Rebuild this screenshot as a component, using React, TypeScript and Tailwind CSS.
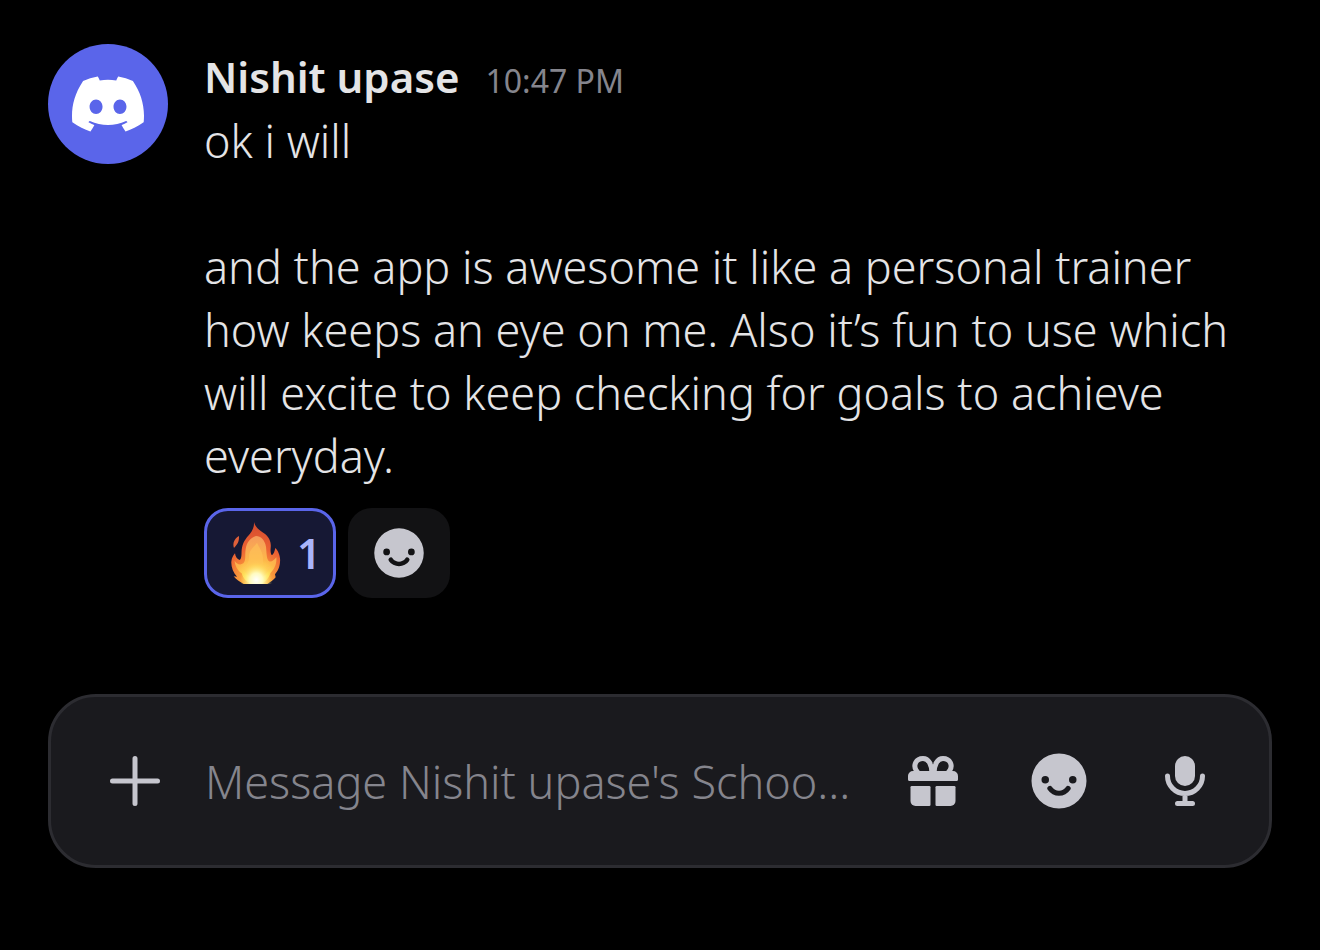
import { SiDiscord } from "react-icons/si";

interface Message {
  author: string;
  time: string;
  body: string;
}

const message: Message = {
  author: "Nishit upase",
  time: "10:47 PM",
  body: "ok i will\n\nand the app is awesome it like a personal trainer how keeps an eye on me. Also it’s fun to use which will excite to keep checking for goals to achieve everyday.",
};

const FireEmoji = () => (
  <svg viewBox="0 0 150 186" className="h-[62px] w-[50px]" aria-hidden="true">
    <defs>
      <radialGradient id="flame" gradientUnits="userSpaceOnUse" cx="75" cy="180" r="160">
        <stop offset="0" stopColor="#ffd45a" />
        <stop offset="0.35" stopColor="#f8953a" />
        <stop offset="0.65" stopColor="#ec6233" />
        <stop offset="1" stopColor="#d9502f" />
      </radialGradient>
      <radialGradient id="inner" gradientUnits="userSpaceOnUse" cx="76" cy="180" r="140">
        <stop offset="0" stopColor="#fffbd0" />
        <stop offset="0.25" stopColor="#ffe65a" />
        <stop offset="0.5" stopColor="#fdb74a" />
        <stop offset="1" stopColor="#f59a5c" />
      </radialGradient>
      <radialGradient id="core">
        <stop offset="0" stopColor="#ffffff" />
        <stop offset="0.4" stopColor="#fffbc0" />
        <stop offset="1" stopColor="#ffe14a" stopOpacity="0" />
      </radialGradient>
      <clipPath id="base">
        <rect width="150" height="186" />
      </clipPath>
    </defs>
    <g clipPath="url(#base)">
      <path
        fill="url(#flame)"
        d="M69 0C72 14 84 24 99 34C116 46 121 62 119 78C118 88 119 96 123 100C128 96 131 88 133 78C142 86 149 104 147 120C146 137 140 147 132 157L134 166C126 175 112 186 96 192H52C34 185 18 176 8 163L18 164C6 151 0 134 1 119C2 108 6 101 12 94C13 104 18 111 26 114C33 108 31 97 32 84C34 62 45 48 57 35C66 24 70 12 69 0Z"
      />
      <path
        fill="url(#inner)"
        d="M76 42C88 42 102 54 105 74C107 92 106 108 113 117C120 122 128 116 136 106C138 126 130 142 118 154C112 174 94 188 76 188C54 188 38 174 32 154C20 145 12 132 11 116C18 128 28 130 37 124C46 114 41 101 44 82C47 60 60 46 76 42Z"
      />
      <path
        fill="#ffc45a"
        opacity="0.6"
        d="M78 62C86 80 98 92 96 118C95 134 110 138 118 132C110 158 94 170 76 170C58 170 42 156 36 136C48 134 54 118 54 102C55 84 68 76 78 62Z"
      />
      <ellipse cx="76" cy="174" rx="48" ry="52" fill="url(#core)" />
      <path fill="#e0603a" d="M24 42C24 52 25 62 9 78C4 64 10 50 24 42Z" />
    </g>
  </svg>
);

const SmileyIcon = ({ className }: { className: string }) => (
  <svg viewBox="0 0 24 24" className={className} aria-hidden="true">
    <path
      fill="#c6c6ce"
      fillRule="evenodd"
      d="M12 23a11 11 0 1 0 0-22 11 11 0 0 0 0 22ZM6.5 13a1.5 1.5 0 1 0 0-3 1.5 1.5 0 0 0 0 3ZM17.5 13a1.5 1.5 0 1 0 0-3 1.5 1.5 0 0 0 0 3ZM9.2 14.4a1 1 0 0 0-1.7 1.1 5.4 5.4 0 0 0 9 0 1 1 0 0 0-1.7-1.1 3.4 3.4 0 0 1-5.6 0Z"
    />
  </svg>
);

const PlusIcon = () => (
  <svg viewBox="0 0 24 24" className="size-[60px]" aria-hidden="true">
    <path d="M12 3v18M3 12h18" stroke="#c6c6ce" strokeWidth="2" strokeLinecap="round" />
  </svg>
);

const GiftIcon = () => (
  <svg viewBox="0 0 24 24" className="size-[60px]" aria-hidden="true">
    <g fill="none" stroke="#c6c6ce" strokeWidth="2">
      <path d="M11.6 9C11.6 5.4 10.2 3 8 3C5.1 3 4 5.8 5.3 7.8L6.2 9" />
      <path d="M12.4 9C12.4 5.4 13.8 3 16 3C18.9 3 20 5.8 18.7 7.8L17.8 9" />
    </g>
    <g fill="#c6c6ce">
      <path d="M4 8h16a2 2 0 0 1 2 2v1.4a.6.6 0 0 1-.6.6H2.6a.6.6 0 0 1-.6-.6V10a2 2 0 0 1 2-2Z" />
      <path d="M3.5 14h7a.5.5 0 0 1 .5.5v7a.5.5 0 0 1-.5.5H5a2 2 0 0 1-2-2v-5.5a.5.5 0 0 1 .5-.5Z" />
      <path d="M13.5 14h7a.5.5 0 0 1 .5.5V20a2 2 0 0 1-2 2h-5.5a.5.5 0 0 1-.5-.5v-7a.5.5 0 0 1 .5-.5Z" />
    </g>
  </svg>
);

const MicIcon = () => (
  <svg viewBox="0 0 24 24" className="size-[60px]" aria-hidden="true">
    <rect x="8" y="2" width="8" height="12" rx="4" fill="#c6c6ce" />
    <path
      d="M5 10a7 7 0 0 0 14 0M12 17v4M9 21h6"
      fill="none"
      stroke="#c6c6ce"
      strokeWidth="2"
      strokeLinecap="round"
    />
  </svg>
);

const App = () => {
  return (
    <main className="min-h-screen bg-black px-12 pt-11 font-['Noto_Sans',sans-serif] text-[#e4e4e6]">
      <article className="flex gap-9">
        <div className="flex size-[120px] shrink-0 items-center justify-center rounded-full bg-[#5a65ea]">
          <SiDiscord className="size-[72px] text-white" aria-hidden="true" />
        </div>
        <div className="min-w-0 flex-1">
          <header className="flex h-[65px] items-baseline gap-[26px]">
            <h2 className="text-[42px] leading-[66px] font-semibold">{message.author}</h2>
            <time className="text-[32px] leading-[66px] text-[#85858d]">{message.time}</time>
          </header>
          <p className="text-[45px] leading-[63px] font-[350] whitespace-pre-line">{message.body}</p>
          <div className="mt-[21px] flex gap-3">
            <button
              type="button"
              aria-pressed="true"
              className="flex h-[90px] w-[132px] items-center justify-between rounded-3xl border-3 border-[#5a65ea] bg-[#161834] pr-3 pl-6"
            >
              <FireEmoji />
              <span className="text-[42px] leading-[66px] font-semibold text-[#a9b4fa]">1</span>
            </button>
            <button
              type="button"
              aria-label="Add reaction"
              className="flex h-[90px] w-[102px] items-center justify-center rounded-3xl bg-[#121214]"
            >
              <SmileyIcon className="size-[54px]" />
            </button>
          </div>
        </div>
      </article>

      <form className="mt-24 flex h-[174px] items-center rounded-[48px] border-3 border-[#2c2c31] bg-[#1a1a1e] px-[54px]">
        <button type="button" aria-label="Add attachment">
          <PlusIcon />
        </button>
        <input
          type="text"
          aria-label="Message"
          placeholder="Message Nishit upase's Schoo..."
          className="ml-10 min-w-0 flex-1 bg-transparent text-[45px] leading-[63px] font-[350] outline-none placeholder:text-[#85858d]"
        />
        <div className="ml-12 flex gap-[66px]">
          <button type="button" aria-label="Send a gift">
            <GiftIcon />
          </button>
          <button type="button" aria-label="Emoji">
            <SmileyIcon className="size-[60px]" />
          </button>
          <button type="button" aria-label="Voice message">
            <MicIcon />
          </button>
        </div>
      </form>
    </main>
  );
};

export default App;
